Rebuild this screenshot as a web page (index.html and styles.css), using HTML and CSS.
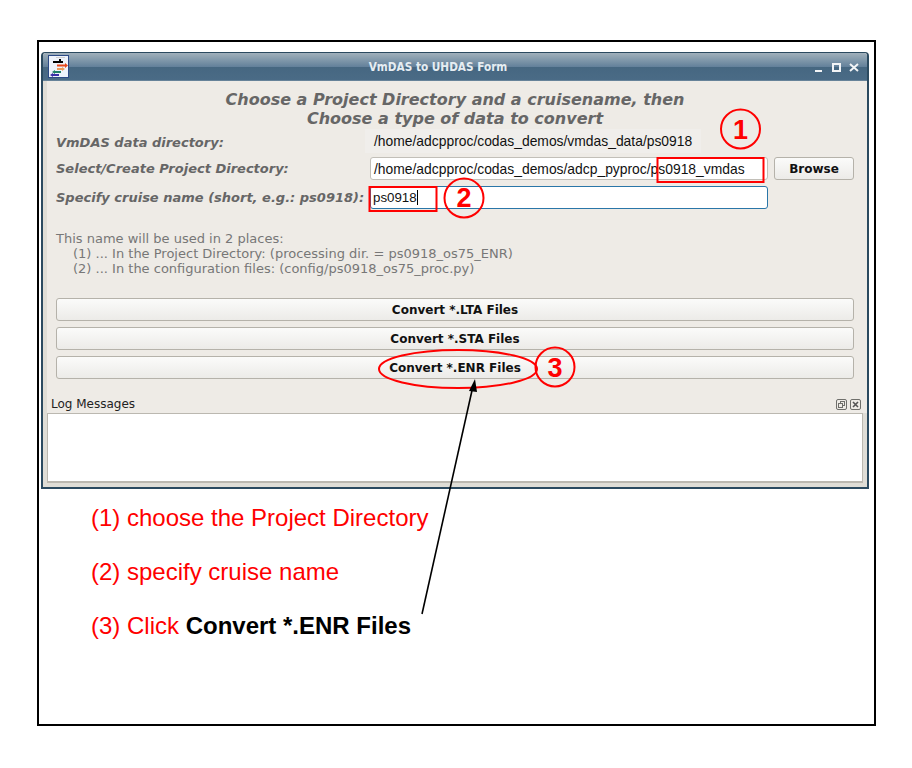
FILE: index.html
```html
<!DOCTYPE html>
<html lang="en">
<head>
<meta charset="utf-8">
<title>VmDAS to UHDAS Form</title>
<link rel="stylesheet" href="styles.css">
</head>
<body>
<main class="slide">
  <section class="window">
    <header class="titlebar">
      <svg class="app-icon" viewBox="0 0 21 23" width="21" height="23">
        <rect x="0.5" y="0.5" width="20" height="22" fill="#eef3fb" stroke="#2c4a86"/>
        <rect x="8" y="2" width="9" height="1" fill="#cfcfcf"/>
        <path d="M5 6h6v-2h2v2h2v2H5z" fill="#000"/>
        <path d="M9 9.5h8v-1.5l3 2.5-3 2.5v-1.5H9z" fill="#e8481c"/>
        <path d="M9 13h5v-1l3 2-3 2v-1H9z" fill="#ee9a5a"/>
        <path d="M13 16H7v-1l-3 2 3 2v-1h6z" fill="#1f7f6a"/>
        <path d="M11 19H5v-1l-3 2 3 2v-1h6z" fill="#3a2ea8"/>
      </svg>
      <h1 class="title">VmDAS to UHDAS Form</h1>
      <div class="controls">
        <span class="ctl-min"></span>
        <span class="ctl-max"></span>
        <svg class="ctl-close" viewBox="0 0 10 9" width="10" height="9"><path d="M1 1l8 7M9 1l-8 7" stroke="#f2f4f6" stroke-width="2"/></svg>
      </div>
    </header>
    <div class="body">
      <div class="form">
        <h2 class="heading">Choose a Project Directory and a cruisename, then<br>Choose a type of data to convert</h2>
        <div class="row row-static">
          <label class="label">VmDAS data directory:</label>
          <div class="static-value">/home/adcpproc/codas_demos/vmdas_data/ps0918</div>
        </div>
        <div class="row row-project">
          <label class="label">Select/Create Project Directory:</label>
          <div class="input">/home/adcpproc/codas_demos/adcp_pyproc/ps0918_vmdas</div>
          <button class="btn btn-browse" type="button">Browse</button>
        </div>
        <div class="row row-cruise">
          <label class="label">Specify cruise name (short, e.g.: ps0918):</label>
          <div class="input input-focus">ps0918<span class="caret"></span></div>
        </div>
        <div class="note">
          <div>This name will be used in 2 places:</div>
          <div class="note-item">(1) ... In the Project Directory: (processing dir. = ps0918_os75_ENR)</div>
          <div class="note-item">(2) ... In the configuration files: (config/ps0918_os75_proc.py)</div>
        </div>
        <div class="actions">
          <button class="btn" type="button">Convert *.LTA Files</button>
          <button class="btn" type="button">Convert *.STA Files</button>
          <button class="btn" type="button">Convert *.ENR Files</button>
        </div>
      </div>
      <div class="log-head">
        <span class="log-title">Log Messages</span>
        <span class="dock-icons">
          <svg viewBox="0 0 11 11" width="11" height="11"><rect x="0.5" y="0.5" width="10" height="10" rx="1.5" fill="none" stroke="#6f6f6b"/><rect x="4.5" y="2.5" width="4" height="4" fill="none" stroke="#6f6f6b"/><rect x="2.5" y="4.5" width="4" height="4" fill="#eeebe6" stroke="#6f6f6b"/></svg>
          <svg viewBox="0 0 11 11" width="11" height="11"><rect x="0.5" y="0.5" width="10" height="10" rx="1.5" fill="none" stroke="#6f6f6b"/><path d="M3 3l5 5M8 3l-5 5" stroke="#555" stroke-width="1.6"/></svg>
        </span>
      </div>
      <div class="log"></div>
    </div>
  </section>
  <div class="steps">
    <p class="step">(1) choose the Project Directory</p>
    <p class="step">(2) specify cruise name</p>
    <p class="step">(3) Click <strong class="step-strong">Convert *.ENR Files</strong></p>
  </div>
</main>
<svg class="overlay" viewBox="0 0 912 768" width="912" height="768">
  <rect class="mark" x="657.5" y="158" width="106" height="24"/>
  <rect class="mark" x="369.5" y="187" width="67" height="24"/>
  <circle class="mark" cx="740.5" cy="129" r="19.5"/>
  <circle class="mark" cx="464" cy="198" r="19.5"/>
  <circle class="mark" cx="555" cy="367" r="19.5"/>
  <ellipse class="mark" cx="458" cy="369" rx="79" ry="19"/>
  <text class="mark-num" x="740.5" y="139">1</text>
  <text class="mark-num" x="464" y="207">2</text>
  <text class="mark-num" x="555" y="377">3</text>
  <path d="M422 614L473 386" stroke="#000" stroke-width="1.6" fill="none"/>
  <path d="M475 379L469 391L477 392Z" fill="#000"/>
</svg>
</body>
</html>
```
FILE: styles.css
```css
* { box-sizing: border-box; }
html, body { margin: 0; padding: 0; background: #fff; }
body { width: 912px; height: 768px; overflow: hidden; position: relative; font-family: "DejaVu Sans", sans-serif; }

.slide {
  width: 839px; height: 686px;
  margin: 40px 0 0 37px;
  border: 2px solid #000;
  padding: 10px 5px 0 2px;
}

.window {
  width: 828px; height: 437px;
  border: 2px solid #2b4a60;
  border-top-width: 1px;
  border-radius: 4px 4px 0 0;
  background: #dfddd6;
  display: flex; flex-direction: column;
}

.titlebar {
  height: 28px; flex: none;
  position: relative;
  display: flex; align-items: center; justify-content: center;
  padding-right: 34px;
  background: linear-gradient(#a0b0bb 0, #62809a 50%, #466781 50%, #4a6b86 96%, #7d95a8 100%);
  border-radius: 3px 3px 0 0;
}
.app-icon { position: absolute; left: 5px; top: 2px; }
.title { margin: 0; font-family: "DejaVu Sans Condensed", "DejaVu Sans", sans-serif; font-stretch: condensed; font-size: 11.7px; font-weight: 700; color: #e6edf2; line-height: 14px; }
.controls { position: absolute; right: 8px; top: 10px; display: flex; align-items: flex-end; height: 9px; }
.ctl-min { width: 7px; height: 2px; background: #f2f4f6; margin-right: 10px; }
.ctl-max { width: 9px; height: 9px; border: 2px solid #f2f4f6; margin-right: 8px; }

.body { flex: 1; display: flex; flex-direction: column; padding: 0 5px 5px 4px; }
.form { background: #eeebe6; padding: 0 13px 0 9px; height: 298px; display: flex; flex-direction: column; margin-right: -5px; }

.heading {
  margin: 9px 0 0;
  font-size: 16px; line-height: 19px;
  font-weight: 700; font-style: italic;
  color: #666; text-align: center;
}
.row { display: flex; align-items: center; position: relative; }
.label { font-size: 13px; font-weight: 700; font-style: italic; color: #666; white-space: nowrap; width: 314px; flex: none; }
.row-static { height: 24px; margin-top: 2px; }
.static-value { font-family: "Liberation Sans", sans-serif; font-size: 13.87px; color: #111; background: #f0eeeb; padding: 0 9px; line-height: 24px; margin: -2px 0 0 -5px; }
.row-project { margin-top: 3px; height: 23px; }
.row-cruise { margin-top: 6px; height: 23px; }
.input {
  width: 398px; height: 23px; flex: none;
  background: #fff;
  border: 1px solid #c2bfb8; border-radius: 3px;
  font-family: "Liberation Sans", sans-serif; font-size: 13.87px; line-height: 22px;
  color: #111; padding: 0 3px;
  white-space: nowrap; overflow: hidden;
}
.input-focus { border-color: #2a76a8; font-size: 13.3px; padding-left: 2px; }
.caret { display: inline-block; width: 1px; height: 15px; background: #000; vertical-align: -3px; margin-left: 0; }

.btn {
  display: block;
  height: 23px; padding: 0;
  border: 1px solid #b5b2aa; border-radius: 3px;
  background: linear-gradient(#fbfbfa, #ecebe8);
  font-family: "DejaVu Sans", sans-serif; font-size: 12px; font-weight: 700;
  color: #111; text-align: center;
}
.btn-browse { width: 80px; margin-left: 6px; flex: none; }

.note { margin-top: 22px; font-size: 13px; line-height: 15px; color: #777; }
.note-item { padding-left: 17px; }
.actions { margin-top: 22px; display: flex; flex-direction: column; gap: 6px; }
.actions .btn { width: 100%; }

.log-head { background: #eeebe6; margin-right: -5px; height: 34px; padding: 0 5px 2px 4px; display: flex; align-items: flex-end; justify-content: space-between; }
.log-title { font-size: 12px; line-height: 14px; color: #222; }
.dock-icons { display: flex; gap: 3px; padding-right: 1px; margin-bottom: 1px; }
.log { width: 816px; height: 70px; background: #fff; border: 1px solid #bbb8b0; border-bottom-width: 2px; }

.steps { padding: 15px 0 0 50px; }
.step { margin: 0 0 26px; font-family: "Liberation Sans", sans-serif; font-size: 24px; line-height: 28px; color: #f00; }
.step-strong { color: #000; font-weight: 700; }

.overlay { position: absolute; left: 0; top: 0; pointer-events: none; }
.mark { fill: none; stroke: #f00; stroke-width: 2; }
.mark-num { font-family: "Liberation Sans", sans-serif; font-size: 27px; font-weight: 700; fill: #f00; text-anchor: middle; }
```
